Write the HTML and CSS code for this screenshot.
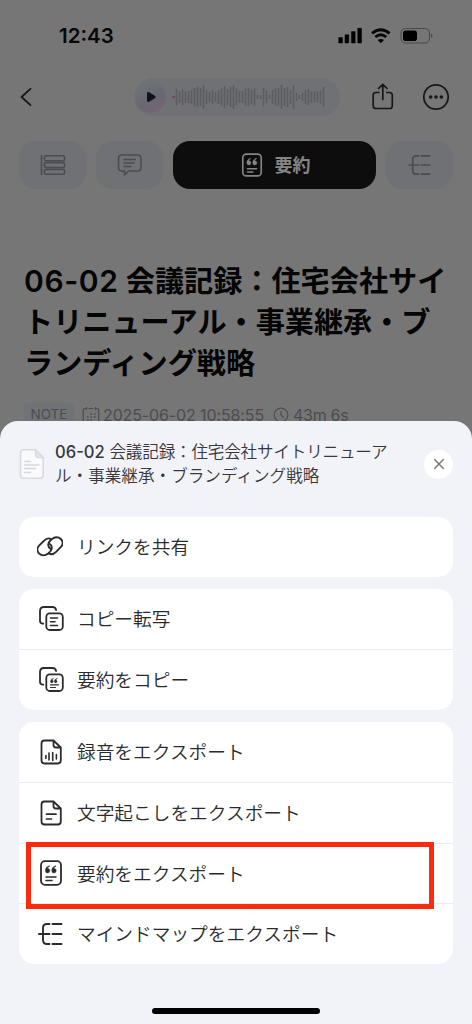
FILE: index.html
```html
<!DOCTYPE html>
<html lang="ja">
<head>
<meta charset="utf-8">
<title>会議記録</title>
<link rel="stylesheet" href="styles.css">
</head>
<body>
<svg class="defs" width="0" height="0">
  <symbol id="quote-doc" viewBox="0 0 26 26">
    <rect x="3" y="1.2" width="20" height="23.6" rx="4" fill="none" stroke="currentColor" stroke-width="1.8"/>
    <path d="M8 17h10M8 20.6h6" fill="none" stroke="currentColor" stroke-width="1.5" stroke-linecap="round"/>
    <path d="M11.400 5.800C8.600 6.500 7.400 8.400 7.400 10.700a2.200 2.200 0 1 0 2-2.200C9.600 7.500 10.200 6.900 11.400 6.500zM17.800 5.800c-2.800.7-4 2.600-4 4.900a2.200 2.200 0 1 0 2-2.200c.2-1 .8-1.600 2-2z" fill="currentColor" stroke="currentColor" stroke-width=".5"/>
  </symbol>
  <symbol id="mindmap" viewBox="0 0 26 24">
    <path d="M1 12h10.500M11.500 2H9Q5 2 5 6v12q0 4 4 4h2.500M14.500 2h9M14.500 12h9M14.500 22h9" fill="none" stroke="currentColor" stroke-width="1.900" stroke-linecap="round"/>
  </symbol>
  <symbol id="copy" viewBox="0 0 26 26">
    <path d="M5.300 17.700H5q-3 0-3-3V5q0-4 4-4h8.500q3 0 3.600 3" fill="none" stroke="currentColor" stroke-width="1.800" stroke-linecap="round"/>
    <rect x="8.300" y="7.400" width="16.500" height="16.600" rx="3.500" fill="none" stroke="currentColor" stroke-width="1.800"/>
  </symbol>
  <symbol id="file" viewBox="0 0 26 26">
    <path d="M15.500 1.500H6.500q-3 0-3 3v17q0 3 3 3h13.300q3 0 3-3V8.500zV6q0 2.500 2.500 2.500h4.800" fill="none" stroke="currentColor" stroke-width="1.800" stroke-linejoin="round"/>
  </symbol>
</svg>
<div class="screen">
  <header class="status">
    <span class="time">12:43</span>
    <svg width="96" height="20" viewBox="0 0 96 20">
      <path d="M.7 10.500h3.800v5.500H.7zM7 7.700h3.800V16H7zM13.400 4.500h3.800V16h-3.800zM19.700 1.300h3.800V16h-3.800z" stroke="#070707" stroke-width=".5" stroke-linejoin="round"/>
      <path d="M34 6.300q8.800-7.200 17.600 0M37.300 10q5.500-4.400 11 0" fill="none" stroke="#070707" stroke-width="2.800"/>
      <path d="M42.800 16.300l-3.200-3.200q3.200-2.400 6.400 0z"/>
      <rect x="63" y="1.500" width="28.500" height="14.500" rx="4.500" fill="none" stroke="#484848"/>
      <rect x="65" y="3.500" width="14" height="10.500" rx="2.800"/>
      <path d="M93 6.500q3 2.200 0 4.500z" fill="#484848"/>
    </svg>
  </header>

  <nav class="toolbar">
    <svg class="back" width="14" height="20" viewBox="0 0 14 20"><path d="M10.500 1.800 1.500 10l9 8.200" fill="none" stroke="#171717" stroke-width="1.800" stroke-linecap="round" stroke-linejoin="round"/></svg>
    <div class="player">
      <span class="play"><svg width="12" height="12" viewBox="0 0 12 12"><path d="M2.500 2.200q0-1.200 1.100-.7l6.300 3.800q1.100.7 0 1.400L3.600 10.500q-1.100.5-1.100-.7z" fill="#111118" stroke="#111118"/></svg></span>
      <svg width="156" height="28" viewBox="0 0 156 28">
        <circle cx="1.500" cy="14" r="1.300" fill="#80404e"/>
        <path transform="translate(-1 0)" d="M5.500 5.500v17M8.500 8v12M11.500 6v16M14.500 8v12M17.500 8v12M20.500 7v14M23.500 5v18M26.500 4v20M29.500 5v18M32.500 2v24M35.500 7v14M38.500 9v10M41.500 7v14M44.500 9v10M47.500 7v14M50.500 5.500v17M53.500 3v22M56.500 6v16M59.500 4v20M62.500 2v24M65.500 5.500v17M68.500 8v12M71.500 8v12M74.500 5.500v17M77.500 5v18M80.500 6.500v15M83.500 5.500v17M86.500 12v4M89.500 12v4M92.500 5v18M95.500 7.500v13M98.500 12v4M101.500 7v14M104.500 5.500v17M107.500 5v18M110.500 2v24M113.500 5v18M116.500 4v20M119.500 7v14M122.500 2v24M125.500 10v8M128.500 12v4M131.500 10v8M134.500 7v14M137.500 6v16M140.500 8v12M143.500 8.500v11M146.500 8.500v11M149.500 7.500v13M152.500 4v20" stroke="#5b5c60" stroke-width="1.500"/>
      </svg>
    </div>
    <svg class="share" width="24" height="28" viewBox="0 0 24 28"><path d="M7.800 9.500H5q-2.800 0-2.800 2.800v10.400q0 2.800 2.800 2.800h13.500q2.800 0 2.800-2.800V12.300q0-2.800-2.800-2.800h-2.700M11.800 16.500V1.500M7.500 5.500l4.300-4.200 4.300 4.200" fill="none" stroke="#171717" stroke-width="1.700" stroke-linecap="round" stroke-linejoin="round"/></svg>
    <svg class="more" width="28" height="28" viewBox="0 0 28 28"><circle cx="14" cy="14" r="12.200" fill="none" stroke="#171717" stroke-width="1.700"/><g fill="#171717"><circle cx="8.700" cy="14" r="1.800"/><circle cx="14" cy="14" r="1.800"/><circle cx="19.300" cy="14" r="1.800"/></g></svg>
  </nav>

  <div class="tabs">
    <div class="tab"><svg width="26" height="24" viewBox="0 0 26 24" fill="none" stroke="currentColor" stroke-width="1.600"><path d="M1.500 2.500v19" stroke-linecap="round"/><rect x="4.500" y="2.800" width="20" height="4.900" rx="1.500"/><rect x="4.500" y="9.600" width="20" height="4.900" rx="1.500"/><rect x="4.500" y="16.400" width="20" height="4.900" rx="1.500"/></svg></div>
    <div class="tab"><svg width="26" height="24" viewBox="0 0 26 24" fill="none" stroke="currentColor" stroke-width="1.600" stroke-linecap="round" stroke-linejoin="round"><path d="M5 2h15.500q3.500 0 3.500 3.500v9q0 3.500-3.500 3.500h-9L7.500 22v-4H5q-3.500 0-3.500-3.500v-9Q1.500 2 5 2z"/><path d="M7 6.500h11.500M7 10h10M7 13.500h7" stroke-width="1.300"/></svg></div>
    <div class="tab active"><svg width="24" height="24"><use href="#quote-doc"/></svg><span>要約</span></div>
    <div class="tab"><svg width="24" height="22"><use href="#mindmap"/></svg></div>
  </div>

  <main>
    <h1><span class="num">06-02</span> 会議記録：住宅会社サイ<br>トリニューアル・事業継承・ブ<br>ランディング戦略</h1>
    <div class="meta">
      <span class="badge">NOTE</span>
      <svg class="cal" width="18" height="18" viewBox="0 0 18 18" fill="none" stroke="currentColor" stroke-width="1.200"><path d="M4 2.500H3q-1.800 0-1.800 1.800v10q0 2 2 2h11.500q2 0 2-2v-10q0-1.800-1.800-1.800H14M6.500 2.500h5M4.500 1v3M13.500 1v3"/><path d="M8.500 8h1.500M12 8h1.500M5 11h1.500M8.500 11h1.500M12 11h1.500M5 14h1.500M8.500 14h1.500" stroke-width="1.500"/></svg>
      <span class="date">2025-06-02 10:58:55</span>
      <svg class="clock" width="16" height="16" viewBox="0 0 16 16" fill="none" stroke="currentColor" stroke-width="1.200"><circle cx="8" cy="8" r="6.800"/><path d="M8 4v4l2.800 2.800"/></svg>
      <span class="len">43m 6s</span>
    </div>
  </main>

  <section class="sheet">
    <div class="head">
      <svg class="doc" width="26" height="32" viewBox="0 0 26 32"><path d="M16.500 1.800H4.500q-3 0-3 3v22.400q0 3 3 3h16.700q3 0 3-3V9.500z" fill="#fafafc" stroke="#d9dae2" stroke-width="1.600"/><path d="M16.500 2v4.500q0 3 3 3h4.700z" fill="#e6e7ed" stroke="#d9dae2" stroke-width="1.300"/><path d="M5.500 13.500h6M5.500 17h14.500M5.500 20.500h11M5.500 24.500h6" stroke="#d5d6df" stroke-width="1.500" stroke-linecap="round"/></svg>
      <p class="name"><b>06-02</b> <span class="first">会議記録：住宅会社サイトリニューア</span><br>ル・事業継承・ブランディング戦略</p>
      <span class="close"><svg width="12" height="12" viewBox="0 0 12 12"><path d="M1.300 1.300l9.400 9.400M10.700 1.300l-9.400 9.400" stroke="#77777b" stroke-width="1.500"/></svg></span>
    </div>
    <div class="card single">
      <div class="row"><svg class="link" viewBox="1 0 26 25" fill="none" stroke="currentColor" stroke-width="1.900" stroke-linecap="round"><path d="M15.100 15.300C11.300 13 11.600 9.300 13.900 7l2-1.900c2.800-2.500 6.600-2.400 8.900-.1s2.300 5.800-.1 8.200l-4.600 4.600c-2.300 2.300-4.900 2.900-7 1.800"/><path d="M12.900 9.300c3.800 2.300 3.500 6 1.200 8.300l-2 1.900c-2.800 2.500-6.600 2.400-8.900.1s-2.300-5.800.1-8.200l4.600-4.600c2.300-2.300 4.900-2.900 7-1.800"/></svg><span>リンクを共有</span></div>
    </div>
    <div class="card">
      <div class="row"><svg viewBox="0 0 26 26"><use href="#copy"/><path d="M12.500 12h7M12.500 15.700h4.500M12.500 19.500h7" stroke="currentColor" stroke-width="1.600" stroke-linecap="round"/></svg><span>コピー転写</span></div>
      <div class="row"><svg viewBox="0 0 26 26"><use href="#copy"/><path d="M12.500 17.800h8M12.500 20.500h5" stroke="currentColor" stroke-width="1.200" stroke-linecap="round"/><path d="M15.500 11.300q-3 .8-3 3.200a1.400 1.400 0 1 0 1.600-1.400q.2-1 1.400-1.300zM19.300 11.300q-3 .8-3 3.200a1.400 1.400 0 1 0 1.600-1.400q.2-1 1.400-1.300z" fill="currentColor" stroke="currentColor" stroke-width=".3"/></svg><span>要約をコピー</span></div>
    </div>
    <div class="card">
      <div class="row"><svg viewBox="0 0 26 26"><use href="#file"/><path d="M7.900 16.500v3M11 14v7M14.700 13.500v8M18.400 15.500v4.500" stroke="currentColor" stroke-width="1.600" stroke-linecap="round"/></svg><span>録音をエクスポート</span></div>
      <div class="row"><svg viewBox="0 0 26 26"><use href="#file"/><path d="M8.500 14.200h9.500M8.500 19h5" stroke="currentColor" stroke-width="1.700" stroke-linecap="round"/></svg><span>文字起こしをエクスポート</span></div>
      <div class="row"><svg><use href="#quote-doc"/></svg><span>要約をエクスポート</span><i class="highlight"></i></div>
      <div class="row"><svg class="map"><use href="#mindmap"/></svg><span>マインドマップをエクスポート</span></div>
    </div>
    <div class="home"></div>
  </section>
</div>
</body>
</html>
```

FILE: styles.css
```css
* { box-sizing: border-box; }
body { margin: 0; font-family: Inter, "Noto Sans CJK JP", sans-serif; }
svg { display: block; flex: none; }
.defs { position: absolute; }
.screen { position: relative; width: 472px; height: 1024px; overflow: hidden; background: #767676; }

.status { display: flex; justify-content: space-between; padding: 23px 38px 0 59px; height: 70px; }
.status svg { margin-top: 4px; }
.time { font-size: 20.500px; line-height: 25px; font-weight: 600; color: #070707; }

.toolbar { display: flex; align-items: center; height: 54px; padding: 0 22px 0 20px; }
.player { display: flex; align-items: center; width: 206px; height: 38px; margin-left: 100px; border-radius: 19px; background: #707174; }
.play { display: flex; align-items: center; justify-content: center; width: 31px; height: 31px; margin: 0 6px 0 1px; border-radius: 50%; background: linear-gradient(150deg, #6d7476 10%, #6a6775 55%, #746671 90%); }
.play svg { margin-left: 1px; }
.share { margin-left: 31px; }
.more { margin-left: auto; }

.tabs { display: flex; gap: 10px; padding: 17px 19px 0; }
.tab { display: flex; align-items: center; justify-content: center; width: 67px; height: 48px; border-radius: 17px; background: #6f7174; color: #4b4c53; }
.tab.active { flex: 1; gap: 12px; background: #0d0d0d; color: #858585; font-size: 18px; font-weight: 600; }
.tab.active svg { position: relative; left: 1px; }
.tab.active span { padding-bottom: 2px; }

main { padding: 72px 24px 0; }
h1 { margin: 0; font-size: 29.150px; line-height: 41px; font-weight: 600; color: #050505; white-space: nowrap; }
.num { font-size: 30px; line-height: 1; letter-spacing: .6px; }
.meta { display: flex; align-items: center; height: 24px; margin-top: 19px; color: #4c4c4e; font-size: 16px; white-space: nowrap; }
.badge { width: 50px; height: 24px; border-radius: 4px; background: #707376; font-size: 13.500px; line-height: 23px; text-align: center; }
.cal { margin: 0 3px 0 8px; }
.date { letter-spacing: -.12px; }
.clock { margin: 0 4px 0 9px; }
.len { letter-spacing: -.3px; }

.sheet { position: absolute; left: 0; right: 0; bottom: 0; height: 603px; padding: 0 19px; border-radius: 18px 18px 0 0; background: #f2f3f8; color: #2b2b2b; }
.head { display: flex; align-items: center; height: 95.700px; padding-bottom: 9px; }
.name { margin: 0 0 1px 10px; font-size: 16.600px; line-height: 24px; font-weight: 350; color: #38383b; white-space: nowrap; }
.first { letter-spacing: -.2px; }
.name b { font-weight: 500; }
.close { display: flex; align-items: center; justify-content: center; width: 29px; height: 29px; margin-left: auto; border-radius: 50%; background: #fff; }
.card { margin-bottom: 12px; border-radius: 15px; background: #fff; }
.row { position: relative; display: flex; align-items: center; height: 60.500px; padding-left: 17px; font-size: 18.700px; font-weight: 350; white-space: nowrap; }
.single .row { height: 60px; }
.row svg { width: 26px; height: 26px; margin: 0 13.500px 0 1.500px; }
.row span { padding-bottom: 2px; }
.row + .row { border-top: 1px solid #ececf0; }
.row .map { height: 24px; }
.row .link { width: 26px; height: 25px; margin: 0 14px 0 1px; }
.highlight { position: absolute; left: 7.300px; top: -2px; width: 408px; height: 67px; border: 5px solid #fb2b0d; z-index: 1; }
.home { width: 168px; height: 6px; margin: 44px auto 0; border-radius: 3px; background: #000; }
```
